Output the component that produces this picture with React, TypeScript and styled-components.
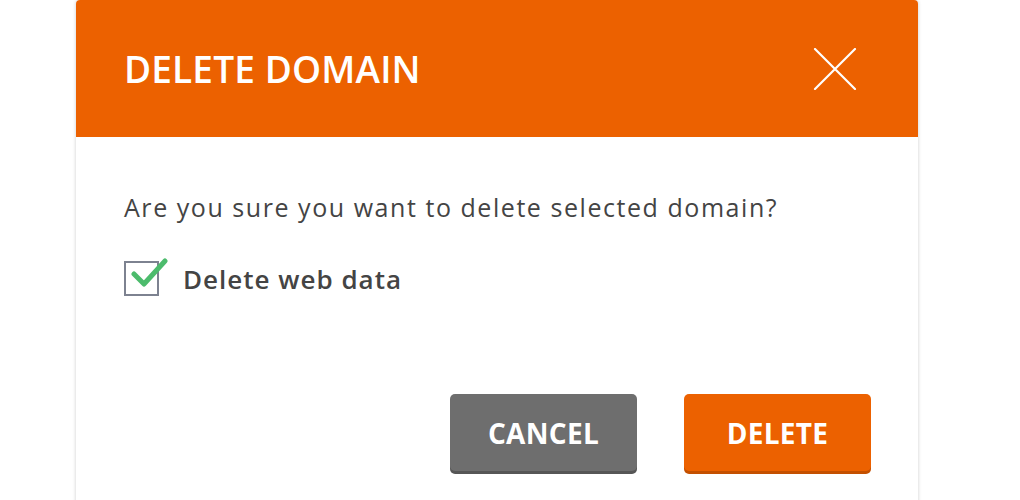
import React from "react";
import styled, { createGlobalStyle } from "styled-components";

const Global = createGlobalStyle`
  html, body { margin: 0; padding: 0; background: #ffffff; overflow: hidden; }
  body { font-family: "Open Sans", "Liberation Sans", sans-serif; }
`;

const Page = styled.div`
  width: 1020px;
  height: 500px;
  padding-left: 76px;
  box-sizing: border-box;
  overflow: hidden;
`;

const Dialog = styled.div`
  width: 842px;
  height: 540px;
  background: #ffffff;
  border-radius: 4px 4px 0 0;
  box-shadow: 0 0 3px 1px rgba(0, 0, 0, 0.12);
  display: flex;
  flex-direction: column;
`;

const Header = styled.div`
  height: 137px;
  flex: none;
  background: #ec6100;
  border-radius: 4px 4px 0 0;
  display: flex;
  align-items: center;
  justify-content: space-between;
  padding: 0 61px 0 48px;
  box-sizing: border-box;
`;

const Title = styled.h1`
  margin: 0;
  color: #ffffff;
  font-family: "Open Sans", "Liberation Sans", sans-serif;
  font-size: 37px;
  font-weight: 600;
  letter-spacing: 0.15px;
  line-height: 1;
`;

const CloseButton = styled.button`
  width: 44px;
  height: 44px;
  padding: 0;
  border: none;
  background: transparent;
  display: flex;
  align-items: center;
  justify-content: center;
  cursor: pointer;
`;

const Body = styled.div`
  padding: 53px 47px 0 48px;
  display: flex;
  flex-direction: column;
`;

const Message = styled.p`
  margin: 0;
  color: #444444;
  font-size: 25px;
  letter-spacing: 1.55px;
  line-height: 34px;
  font-weight: 400;
`;

const CheckRow = styled.label`
  margin-top: 37px;
  display: flex;
  align-items: center;
  gap: 24px;
  cursor: pointer;
`;

const Box = styled.span`
  position: relative;
  width: 31px;
  height: 31px;
  border: 2px solid #7d8290;
  flex: none;
`;

const CheckMark = styled.svg`
  position: absolute;
  left: 4px;
  top: -5px;
`;

const CheckLabel = styled.span`
  color: #444444;
  font-size: 26px;
  font-weight: 600;
  letter-spacing: 1px;
  line-height: 34px;
`;

const Actions = styled.div`
  margin-top: 98px;
  display: flex;
  justify-content: flex-end;
  gap: 47px;
`;

const Button = styled.button<{ $variant: "primary" | "secondary" }>`
  width: 187px;
  height: 77px;
  border: none;
  border-radius: 5px;
  color: #ffffff;
  font-family: "Open Sans", "Liberation Sans", sans-serif;
  font-size: 28px;
  font-weight: 700;
  letter-spacing: 0.3px;
  cursor: pointer;
  background: ${(p) => (p.$variant === "primary" ? "#ec6100" : "#6e6e6e")};
  box-shadow: 0 3px 0 ${(p) => (p.$variant === "primary" ? "#c45000" : "#565656")};
`;

export default function App() {
  return (
    <>
      <Global />
      <Page>
        <Dialog>
          <Header>
            <Title>DELETE DOMAIN</Title>
            <CloseButton aria-label="Close">
              <svg width="44" height="42" viewBox="0 0 44 42">
                <path d="M2 1 L42 41 M42 1 L2 41" stroke="#ffffff" strokeWidth="2.2" strokeLinecap="round" fill="none" />
              </svg>
            </CloseButton>
          </Header>
          <Body>
            <Message>Are you sure you want to delete selected domain?</Message>
            <CheckRow>
              <Box>
                <CheckMark width="38" height="30" viewBox="0 0 38 30">
                  <path d="M4 16 L14 26 L35 3" stroke="#4cbb6c" strokeWidth="5" fill="none" strokeLinecap="round" strokeLinejoin="round" />
                </CheckMark>
              </Box>
              <CheckLabel>Delete web data</CheckLabel>
            </CheckRow>
            <Actions>
              <Button $variant="secondary">CANCEL</Button>
              <Button $variant="primary">DELETE</Button>
            </Actions>
          </Body>
        </Dialog>
      </Page>
    </>
  );
}
